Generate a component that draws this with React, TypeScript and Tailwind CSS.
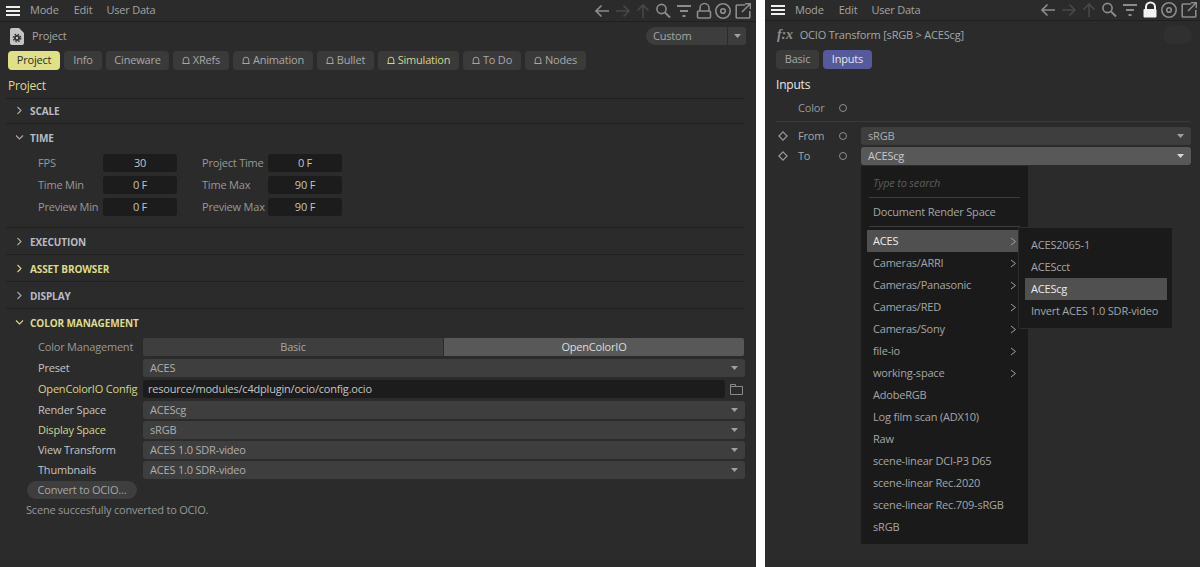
import React from "react";

const Hamburger = () => (
  <svg width="14" height="10" viewBox="0 0 14 10" className="text-[#eeeeee]">
    <rect x="0" y="0" width="14" height="2" fill="currentColor" />
    <rect x="0" y="4" width="14" height="2" fill="currentColor" />
    <rect x="0" y="8" width="14" height="2" fill="currentColor" />
  </svg>
);

const ToolIcons = ({ locked }: { locked?: boolean }) => (
  <svg width="156" height="18" viewBox="0 0 156 18" fill="none" strokeWidth="1.6">
    <path d="M1 9h13M6.5 3.5 1 9l5.5 5.5" stroke="#8c8c8c" />
    <path d="M21 9h13M28.5 3.5 34 9l-5.5 5.5" stroke="#484848" />
    <path d="M48 16V3M42.5 8.5 48 3l5.5 5.5" stroke="#484848" />
    <circle cx="66.5" cy="7" r="4.6" stroke="#8c8c8c" />
    <path d="m70 10.5 5 5" stroke="#8c8c8c" strokeWidth="2" />
    <path d="M82 4h14M85 9h8M87.5 14h3" stroke="#8c8c8c" strokeWidth="2" />
    {locked ? (
      <>
        <path d="M105 8V6a4.5 4.5 0 0 1 9 0v2" stroke="#f2f2f2" strokeWidth="2" />
        <rect x="102.5" y="8" width="13" height="8.5" rx="1" fill="#f2f2f2" />
      </>
    ) : (
      <>
        <path d="M105 9V6a4.5 4.5 0 0 1 9 0v3" stroke="#8c8c8c" />
        <rect x="102.5" y="9" width="13" height="7" rx="1" stroke="#8c8c8c" />
      </>
    )}
    <circle cx="128" cy="9" r="7.2" stroke="#8c8c8c" />
    <circle cx="128" cy="9" r="2.3" stroke="#8c8c8c" />
    <path d="M150 3h-8a.8.8 0 0 0-.8.8v11.4a.8.8 0 0 0 .8.8h12a.8.8 0 0 0 .8-.8V9" stroke="#8c8c8c" />
    <path d="m147 10 8-8M150 1.8h5.4v5.4" stroke="#8c8c8c" />
  </svg>
);

const MenuBar = ({ locked }: { locked?: boolean }) => (
  <div
    className={`flex shrink-0 items-center border-b border-[#1f1f1f] pl-[6px] text-[11px] text-[#a3a3a3] ${
      locked ? "h-[21px] pr-[3px]" : "h-[22px] pr-[5px]"
    }`}
  >
    <Hamburger />
    <span className="ml-[10px]">Mode</span>
    <span className="ml-[15px]">Edit</span>
    <span className="ml-[14px]">User Data</span>
    <div className="ml-auto">
      <ToolIcons locked={locked} />
    </div>
  </div>
);

const Bell = ({ yellow }: { yellow?: boolean }) => (
  <svg width="8" height="9" viewBox="0 0 8 9" fill="none" className="mr-[3px] shrink-0">
    <path d="M1.2 7.5V4a2.8 2.8 0 0 1 5.6 0v3.5ZM.3 7.5h7.4" stroke={yellow ? "#d8d878" : "#a8a8a8"} strokeWidth="0.9" />
  </svg>
);

const tabs: { label: string; w: string; bell?: boolean; yellow?: boolean; active?: boolean }[] = [
  { label: "Project", w: "w-[52px]", active: true },
  { label: "Info", w: "w-[38px]" },
  { label: "Cineware", w: "w-[63px]" },
  { label: "XRefs", w: "w-[56px]", bell: true },
  { label: "Animation", w: "w-[80px]", bell: true },
  { label: "Bullet", w: "w-[57px]", bell: true },
  { label: "Simulation", w: "w-[81px]", bell: true, yellow: true },
  { label: "To Do", w: "w-[58px]", bell: true },
  { label: "Nodes", w: "w-[61px]", bell: true },
];

const Chevron = ({ open, yellow }: { open?: boolean; yellow?: boolean }) => (
  <svg width="9" height="9" viewBox="0 0 9 9" fill="none" className="shrink-0 -translate-y-[1px]">
    <path
      d={open ? "M1 2.5 4.5 6 8 2.5" : "M2.5 1 6 4.5 2.5 8"}
      stroke={yellow ? "#d8d880" : "#a9a9a9"}
      strokeWidth="1.1"
    />
  </svg>
);

const Section = ({ label, open, yellow, first }: { label: string; open?: boolean; yellow?: boolean; first?: boolean }) => (
  <div className={`flex items-center pl-[15px] ${first ? "h-[24px]" : "h-[26px] pt-[2px]"}`}>
    <Chevron open={open} yellow={yellow} />
    <span className={`ml-[6px] text-[10px] font-bold tracking-[-0.1px] ${yellow ? "text-[#dcdc8c]" : "text-[#b9bcc4]"}`}>{label}</span>
  </div>
);

const Line = () => <div className="mr-[11px] ml-[6px] h-px bg-[#1f1f1f]" />;

const NumField = ({ label, value, labelW }: { label: string; value: string; labelW: string }) => (
  <div className="flex items-center">
    <span className={`${labelW} whitespace-nowrap text-[11px] text-[#989898]`}>{label}</span>
    <div className="flex h-[18px] w-[74px] items-center justify-center rounded-[3px] bg-[#1c1c1c] text-[11px] text-[#c4c4c4]">{value}</div>
  </div>
);

const Caret = ({ light }: { light?: boolean }) => (
  <svg width="7" height="4" viewBox="0 0 7 4" className="shrink-0">
    <path d="M0 0h7L3.5 4Z" fill={light ? "#d8d8d8" : "#a0a0a0"} />
  </svg>
);

const SelectField = ({ value, light }: { value: string; light?: boolean }) => (
  <div
    className={`flex h-[18px] flex-1 items-center justify-between rounded-[3px] px-[7px] text-[11px] ${
      light ? "bg-[#585858] text-[#c8c8c8]" : "bg-[#3e3e3e] text-[#aeaeae]"
    }`}
  >
    <span>{value}</span>
    <Caret light={light} />
  </div>
);

const FormRow = ({ label, yellow, children, className }: { label: string; yellow?: boolean; children: React.ReactNode; className?: string }) => (
  <div className={`flex items-center ${className ?? ""}`}>
    <span className={`w-[143px] shrink-0 whitespace-nowrap pl-[38px] text-[11px] ${yellow ? "text-[#d4d488]" : "text-[#c4c4c4]"}`}>{label}</span>
    <div className="flex flex-1 items-center">{children}</div>
  </div>
);

const FolderIcon = () => (
  <svg width="13" height="11" viewBox="0 0 13 11" fill="none" className="ml-[5px] mr-[2px] shrink-0">
    <path d="M.5 2.5h12v8H.5ZM.5 2.5V.5h5v2" stroke="#8a8a8a" strokeWidth="1" />
  </svg>
);

const Port = () => (
  <span className="block h-[8px] w-[8px] shrink-0 rounded-full border-[1.5px] border-[#8e8e8e]" />
);

const Diamond = () => (
  <svg width="10" height="10" viewBox="0 0 10 10" fill="none" className="shrink-0">
    <path d="M5 .9 9.1 5 5 9.1.9 5Z" stroke="#9a9a9a" strokeWidth="1.2" />
  </svg>
);

const Arrow = () => (
  <svg width="7" height="9" viewBox="0 0 7 9" fill="none" className="shrink-0">
    <path d="M1 1 5.5 4.5 1 8" stroke="#a0a0a0" strokeWidth="1" />
  </svg>
);

const PopRow = ({ label, arrow, active }: { label: string; arrow?: boolean; active?: boolean }) => (
  <div
    className={`flex h-[22px] items-center justify-between whitespace-nowrap pl-[6px] pr-[1px] text-[11px] ${
      active ? "bg-[#505050] text-[#ececec]" : "text-[#a6a6a6]"
    }`}
  >
    <span>{label}</span>
    {arrow && <Arrow />}
  </div>
);

const Popup = () => (
  <div className="absolute left-[96px] top-[166px] h-[378px] w-[167px] bg-[#1a1a1a] text-[11px]">
    <div className="mx-2 flex h-[32px] items-center border-b border-[#3d3d3d] pl-[4px] pt-[3px] italic text-[#5c5c5c]">Type to search</div>
    <div className="mx-2 flex h-[29px] items-center border-b border-[#3d3d3d] pl-[4px] text-[#a6a6a6]">Document Render Space</div>
    <div className="ml-[6px] mr-[10px] mt-[3px]">
      <PopRow label="ACES" arrow active />
      <PopRow label="Cameras/ARRI" arrow />
      <PopRow label="Cameras/Panasonic" arrow />
      <PopRow label="Cameras/RED" arrow />
      <PopRow label="Cameras/Sony" arrow />
      <PopRow label="file-io" arrow />
      <PopRow label="working-space" arrow />
      <PopRow label="AdobeRGB" />
      <PopRow label="Log film scan (ADX10)" />
      <PopRow label="Raw" />
      <PopRow label="scene-linear DCI-P3 D65" />
      <PopRow label="scene-linear Rec.2020" />
      <PopRow label="scene-linear Rec.709-sRGB" />
      <PopRow label="sRGB" />
    </div>
    <div className="absolute left-[157px] top-[61px] h-[102px] w-[155px] rounded-[2px] border border-[#2c2c2c] bg-[#1a1a1a] py-[6px] pl-[6px] pr-[5px]">
      <PopRow label="ACES2065-1" />
      <PopRow label="ACEScct" />
      <PopRow label="ACEScg" active />
      <PopRow label="Invert ACES 1.0 SDR-video" />
    </div>
  </div>
);

const LeftPanel = () => (
  <div className="flex h-full w-[756px] shrink-0 flex-col bg-[#2b2b2b]">
    <MenuBar />
    <div className="flex h-[29px] shrink-0 items-center px-[10px] pb-px">
      <svg width="14" height="17" viewBox="0 0 14 17" fill="none">
        <path d="M2 0h7l5 5v10a2 2 0 0 1-2 2H2a2 2 0 0 1-2-2V2a2 2 0 0 1 2-2Z" fill="#c4c4c4" />
        <circle cx="7" cy="10" r="3" fill="#2f2f2f" />
        <circle cx="7" cy="10" r="3.8" stroke="#2f2f2f" strokeWidth="1.2" strokeDasharray="1.5 1.5" />
        <circle cx="7" cy="10" r="1.2" fill="#c4c4c4" />
      </svg>
      <span className="ml-[8px] text-[11px] text-[#a6a6a6]">Project</span>
      <div className="ml-auto flex h-[18px] w-[100px] items-center overflow-hidden rounded-[9px_3px_3px_9px] bg-[#3d3d3d] text-[11px] text-[#a6a6a6]">
        <span className="flex-1 pl-[7px]">Custom</span>
        <span className="flex h-full w-[19px] items-center justify-center border-l border-[#2b2b2b]">
          <Caret />
        </span>
      </div>
    </div>
    <div className="flex shrink-0 gap-[4px] pl-[8px]">
      {tabs.map((t) => (
        <div
          key={t.label}
          className={`flex h-[19px] items-center justify-center rounded-[4px] text-[11px] ${t.w} ${
            t.active ? "bg-[#dfe088] text-[#2b2b2b]" : t.yellow ? "bg-[#3a3a3a] text-[#d4d488]" : "bg-[#3a3a3a] text-[#a8a8a8]"
          }`}
        >
          {t.bell && <Bell yellow={t.yellow} />}
          {t.label}
        </div>
      ))}
    </div>
    <div className="flex h-[28px] shrink-0 items-center pl-[8px] pt-[3px] text-[12px] text-[#dcdc8c]">Project</div>
    <Line />
    <Section label="SCALE" first />
    <Line />
    <Section label="TIME" open />
    <div className="flex h-[77px] flex-col gap-[4px] pl-[38px] pt-[4px]">
      <div className="flex gap-[8px]">
        <NumField label="FPS" value="30" labelW="w-[65px]" />
        <span className="w-[9px]" />
        <NumField label="Project Time" value="0 F" labelW="w-[66px]" />
      </div>
      <div className="flex gap-[8px]">
        <NumField label="Time Min" value="0 F" labelW="w-[65px]" />
        <span className="w-[9px]" />
        <NumField label="Time Max" value="90 F" labelW="w-[66px]" />
      </div>
      <div className="flex gap-[8px]">
        <NumField label="Preview Min" value="0 F" labelW="w-[65px]" />
        <span className="w-[9px]" />
        <NumField label="Preview Max" value="90 F" labelW="w-[66px]" />
      </div>
    </div>
    <Line />
    <Section label="EXECUTION" />
    <Line />
    <Section label="ASSET BROWSER" yellow />
    <Line />
    <Section label="DISPLAY" />
    <Line />
    <Section label="COLOR MANAGEMENT" open yellow />
    <div className="flex flex-col pr-[11px] pt-[3px]">
      <div className="flex items-center">
        <span className="w-[143px] shrink-0 pl-[38px] text-[11px] text-[#989898]">Color Management</span>
        <div className="flex h-[18px] flex-1 items-center gap-px pr-px text-[11px]">
          <div className="flex h-full flex-1 items-center justify-center rounded-l-[2px] bg-[#3e3e3e] text-[#a6a6a6]">Basic</div>
          <div className="flex h-full flex-1 items-center justify-center rounded-r-[2px] bg-[#585858] text-[#dddddd]">OpenColorIO</div>
        </div>
      </div>
      <FormRow label="Preset" className="mt-[3px]"><SelectField value="ACES" /></FormRow>
      <FormRow label="OpenColorIO Config" yellow className="mt-[3px]">
        <div className="flex h-[18px] flex-1 items-center rounded-[3px] bg-[#1c1c1c] pl-[5px] text-[11px] text-[#c4c4c4]">resource/modules/c4dplugin/ocio/config.ocio</div>
        <FolderIcon />
      </FormRow>
      <FormRow label="Render Space" className="mt-[3px]"><SelectField value="ACEScg" /></FormRow>
      <FormRow label="Display Space" yellow className="mt-[2px]"><SelectField value="sRGB" /></FormRow>
      <FormRow label="View Transform" className="mt-[2px]"><SelectField value="ACES 1.0 SDR-video" /></FormRow>
      <FormRow label="Thumbnails" className="mt-[2px]"><SelectField value="ACES 1.0 SDR-video" /></FormRow>
      <div className="ml-[27px] mt-[2px] flex h-[18px] w-[110px] items-center justify-center rounded-full bg-[#3e3e3e] text-[11px] text-[#a6a6a6]">Convert to OCIO...</div>
      <div className="ml-[26px] mt-[1px] flex h-[20px] items-center text-[11px] text-[#989898]">Scene succesfully converted to OCIO.</div>
    </div>
  </div>
);

const RightPanel = () => (
  <div className="relative flex h-full flex-1 flex-col bg-[#2b2b2b]">
    <MenuBar locked />
    <div className="flex h-[29px] shrink-0 items-center pb-px pl-[12px] pr-[8px]">
      <span className="font-['Liberation_Serif',serif] text-[14px] font-bold italic leading-none text-[#8e8e8e]">f:x</span>
      <span className="ml-[7px] text-[11px] text-[#a6a6a6]">OCIO Transform [sRGB &gt; ACEScg]</span>
      <span className="ml-auto h-[18px] w-[29px] rounded-full bg-[#303030]" />
    </div>
    <div className="flex shrink-0 gap-[4px] pl-[11px]">
      <div className="flex h-[19px] w-[43px] items-center justify-center rounded-[4px] bg-[#3a3a3a] text-[11px] text-[#a8a8a8]">Basic</div>
      <div className="flex h-[19px] w-[49px] items-center justify-center rounded-[4px] bg-[#555a9c] text-[11px] text-[#e6e6e6]">Inputs</div>
    </div>
    <div className="flex h-[28px] shrink-0 items-center pl-[11px] pt-[3px] text-[12px] text-[#e8e8e8]">Inputs</div>
    <div className="flex h-[24px] shrink-0 items-center pb-[2px] pl-[33px] text-[11px] text-[#989898]">
      <span className="w-[41px]">Color</span>
      <Port />
    </div>
    <div className="ml-[11px] mr-[9px] h-px shrink-0 bg-[#3a3a3a]" />
    <div className="flex flex-col gap-[2px] pl-[13px] pr-[9px] pt-[5px] text-[11px] text-[#a6a6a6]">
      <div className="flex items-center">
        <Diamond />
        <span className="ml-[10px] w-[41px]">From</span>
        <Port />
        <div className="ml-[14px] flex flex-1"><SelectField value="sRGB" /></div>
      </div>
      <div className="flex items-center">
        <Diamond />
        <span className="ml-[10px] w-[41px]">To</span>
        <Port />
        <div className="ml-[14px] flex flex-1"><SelectField value="ACEScg" light /></div>
      </div>
    </div>
    <Popup />
  </div>
);

export default function App() {
  return (
    <div className="flex h-[567px] w-[1200px] gap-[9px] overflow-hidden bg-white font-['Open_Sans','Noto_Sans',sans-serif] tracking-[-0.2px]">
      <LeftPanel />
      <RightPanel />
    </div>
  );
}
